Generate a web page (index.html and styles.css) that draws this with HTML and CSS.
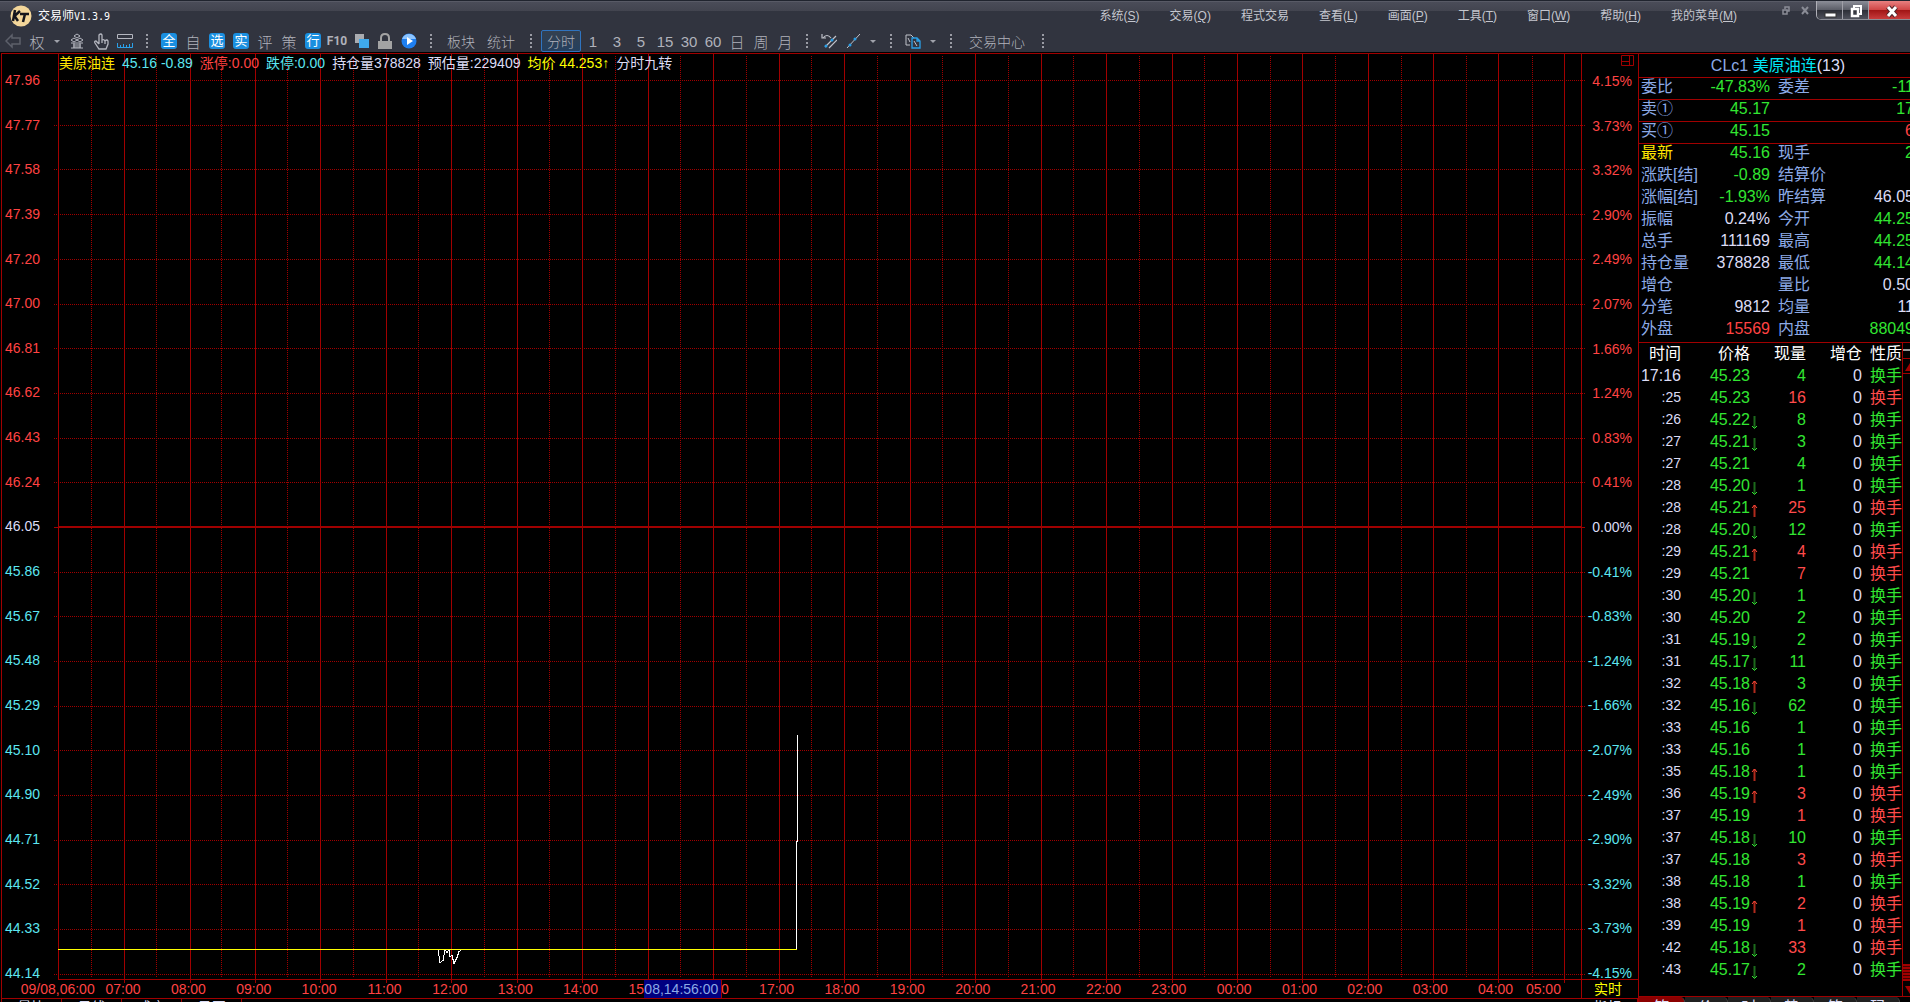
FILE: index.html
```html
<!DOCTYPE html>
<html lang="zh-CN">
<head>
  <meta charset="UTF-8" />
  <meta name="viewport" content="width=device-width, initial-scale=1.0"/>
  <title>交易师V1.3.9</title>
  <link rel="stylesheet" href="styles.css">
</head>
<body>

  <!-- Shared arrow shapes for the tick list -->
  <svg class="defs" width="0" height="0">
    <symbol id="up" viewBox="0 0 7 13">
      <path d="M3.5 1V13" stroke="#b02a1c" stroke-width="2"/>
      <path d="M1 4L3.5 1L6 4" stroke="#ff4a3c" fill="none"/>
    </symbol>
    <symbol id="down" viewBox="0 0 7 13">
      <path d="M3.5 0V12" stroke="#1c6a1c" stroke-width="2"/>
      <path d="M1 10L3.5 12.500L6 10" stroke="#32e632" fill="none"/>
    </symbol>
  </svg>

  <!-- Title bar and toolbar -->
  <header>
    <div class="titlebar">
      <svg class="logo" width="22" height="22" viewBox="0 0 22 22">
        <circle cx="11" cy="11" r="10.500" fill="#f3d69a"/>
        <path d="M5 5L3 16M10 6L4.500 11L8 16" stroke="#15151c" stroke-width="2.500" fill="none"/>
        <path d="M10 9H19M15 9L13 17" stroke="#15151c" stroke-width="2.500" fill="none"/>
      </svg>
      <div class="app-title">交易师<span>V1.3.9</span></div>
      <nav>
        <a href="#">系统(<u>S</u>)</a>
        <a href="#">交易(<u>Q</u>)</a>
        <a href="#">程式交易</a>
        <a href="#">查看(<u>L</u>)</a>
        <a href="#">画面(<u>P</u>)</a>
        <a href="#">工具(<u>T</u>)</a>
        <a href="#">窗口(<u>W</u>)</a>
        <a href="#">帮助(<u>H</u>)</a>
        <a href="#">我的菜单(<u>M</u>)</a>
      </nav>
      <div class="mdi">
        <button aria-label="还原子窗口"><svg width="8" height="9" viewBox="0 0 8 9"><path d="M3 3V1H7V5H5M1 4H5V8H1Z" fill="none" stroke="#8a8c96" stroke-width="1.500"/></svg></button>
        <button aria-label="关闭子窗口"><svg width="8" height="9" viewBox="0 0 8 9"><path d="M1 1L7 8M7 1L1 8" stroke="#8a8c96" stroke-width="2"/></svg></button>
      </div>
      <div class="win-buttons">
        <button aria-label="最小化"><svg width="14" height="14" viewBox="0 0 14 14"><rect x="2" y="9" width="11" height="4" fill="#fff" stroke="#333" stroke-width="1"/></svg></button>
        <button aria-label="还原"><svg width="14" height="14" viewBox="0 0 14 14"><path d="M5 4V2H12V10H10" fill="none" stroke="#fff" stroke-width="2"/><path d="M3 5H9V12H3Z" fill="none" stroke="#fff" stroke-width="2.500"/></svg></button>
        <button class="close" aria-label="关闭"><svg width="14" height="14" viewBox="0 0 14 14"><path d="M3 3L11 12M11 3L3 12" stroke="#50242a" stroke-width="5"/><path d="M3 3L11 12M11 3L3 12" stroke="#fff" stroke-width="3"/></svg></button>
      </div>
    </div>

    <div class="toolbar">
      <button aria-label="后退"><svg width="16" height="16" viewBox="0 0 16 16"><path d="M1 8L7 2V5H15V11H7V14Z" fill="none" stroke="#5d606b" stroke-width="1.500"/></svg></button>
      <button>权</button>
      <button class="caret" aria-label="复权选项"></button>
      <button aria-label="叠加"><svg width="14" height="16" viewBox="0 0 14 16"><path d="M7 1L10 3L7 5L4 3ZM4 5L7 7L4 9L1 7ZM10 5L13 7L10 9L7 7ZM1 10H13M3 12H11M3 14H11M1 15H13M4 10V15M10 10V15" fill="none" stroke="#b4b6bf"/></svg></button>
      <button aria-label="拖动"><svg width="15" height="17" viewBox="0 0 15 17"><path d="M5 11L2 8Q0 8 1 10L5 16H12L14 11V8Q13 6 11 8Q10 6 8 7V2Q7 0 5 2V11M8 7V10M11 8V11" fill="none" stroke="#b4b6bf" stroke-width="1.300"/></svg></button>
      <button aria-label="标尺"><svg width="16" height="16" viewBox="0 0 16 16"><path d="M.5 1.500H15.500V5.500H.5Z" fill="none" stroke="#b4b6bf"/><path d="M.5 10V14.500H15.500V10M3.500 14V12M6.500 14V11M9.500 14V12M12.500 14V11" fill="none" stroke="#2aa0e8"/></svg></button>
      <i class="sep"></i>
      <button><b>全</b></button>
      <button>自</button>
      <button><b>选</b></button>
      <button><b>实</b></button>
      <button>评</button>
      <button>策</button>
      <button><b>行</b></button>
      <button class="f10">F10</button>
      <button aria-label="窗口叠放"><svg width="15" height="16" viewBox="0 0 15 16"><rect x="1" y="1" width="9" height="9" fill="#a9abb0"/><rect x="5" y="6" width="10" height="9" fill="#3fa9ec"/></svg></button>
      <button aria-label="锁定"><svg width="16" height="16" viewBox="0 0 16 16"><path d="M4 8V5Q4 1 8 1Q12 1 12 5V8" fill="none" stroke="#a3a3a3" stroke-width="2"/><rect x="1" y="8" width="14" height="8" fill="#a3a3a3"/></svg></button>
      <button aria-label="播放"><svg width="16" height="16" viewBox="0 0 16 16"><circle cx="8" cy="8" r="7.500" fill="#1f7ff0"/><path d="M1 6Q3 1 8 1Q13 1 15 6Z" fill="#8cc4ff"/><path d="M6 4L12 8L6 12Z" fill="#fff"/></svg></button>
      <i class="sep"></i>
      <button class="wide">板块</button>
      <button class="wide">统计</button>
      <i class="sep"></i>
      <button class="wide active">分时</button>
      <button>1</button>
      <button>3</button>
      <button>5</button>
      <button>15</button>
      <button>30</button>
      <button>60</button>
      <button>日</button>
      <button>周</button>
      <button>月</button>
      <i class="sep"></i>
      <button aria-label="撤销画线"><svg width="16" height="16" viewBox="0 0 16 16"><path d="M2 5Q6 0 10 5M1 1V5H5M4 14L15 3M8 15L16 7" fill="none" stroke="#c0c2ca" stroke-width="1.200"/><circle cx="5" cy="13" r="1.500" fill="#2aa0e8"/><circle cx="11" cy="7" r="1.500" fill="#2aa0e8"/></svg></button>
      <button aria-label="画线"><svg width="14" height="16" viewBox="0 0 14 16"><path d="M1 15L14 1" stroke="#c0c2ca"/><circle cx="4" cy="12" r="1.500" fill="#2aa0e8"/><circle cx="9" cy="6" r="1.500" fill="#2aa0e8"/></svg></button>
      <button class="caret" aria-label="画线选项"></button>
      <i class="sep"></i>
      <button aria-label="复制画面"><svg width="16" height="16" viewBox="0 0 16 16"><path d="M5 12H1V2H6L9 5M3 5L5 9" fill="none" stroke="#c0c2ca"/><path d="M7 5H12L15 8V15H7ZM12 5V8H15" fill="none" stroke="#2aa0e8" stroke-width="1.300"/><path d="M9 8L12 13" stroke="#c0c2ca"/></svg></button>
      <button class="caret" aria-label="复制选项"></button>
      <i class="sep"></i>
      <button class="center">交易中心</button>
      <i class="sep"></i>
    </div>
  </header>

  <main>
    <section class="chart-area">
      <div class="chart">
        <!-- Price axis -->
        <ul class="axis price-axis">
          <li class="red">47.96</li>
          <li class="red">47.77</li>
          <li class="red">47.58</li>
          <li class="red">47.39</li>
          <li class="red">47.20</li>
          <li class="red">47.00</li>
          <li class="red">46.81</li>
          <li class="red">46.62</li>
          <li class="red">46.43</li>
          <li class="red">46.24</li>
          <li class="white">46.05</li>
          <li class="cyan">45.86</li>
          <li class="cyan">45.67</li>
          <li class="cyan">45.48</li>
          <li class="cyan">45.29</li>
          <li class="cyan">45.10</li>
          <li class="cyan">44.90</li>
          <li class="cyan">44.71</li>
          <li class="cyan">44.52</li>
          <li class="cyan">44.33</li>
          <li class="cyan">44.14</li>
        </ul>

        <!-- Intraday plot -->
        <div class="plot">
          <svg class="grid" viewBox="0 0 1523 925" preserveAspectRatio="none">
            <g transform="translate(.5 0)">
              <path class="line" d="M0 0V925M66 0V929M132 0V929M197 0V929M262 0V929M328 0V929M393 0V929M459 0V929M524 0V929M590 0V929M655 0V929M721 0V929M786 0V929M852 0V929M917 0V929M983 0V929M1048 0V929M1114 0V929M1179 0V929M1244 0V929M1310 0V929M1375 0V929M1440 0V929M1506 0V929"/>
              <path class="line dots" d="M33 2V924M98 2V924M163 2V924M229 2V924M295 2V924M360 2V924M426 2V924M491 2V924M557 2V924M622 2V924M688 2V924M753 2V924M819 2V924M884 2V924M950 2V924M1015 2V924M1081 2V924M1146 2V924M1212 2V924M1277 2V924M1343 2V924M1408 2V924M1474 2V924"/>
            </g>
            <g transform="translate(0 .5)">
              <path class="line dots" d="M-4 26H1527M-4 71H1527M-4 115H1527M-4 160H1527M-4 205H1527M-4 250H1527M-4 294H1527M-4 339H1527M-4 384H1527M-4 428H1527M-4 518H1527M-4 562H1527M-4 607H1527M-4 652H1527M-4 696H1527M-4 741H1527M-4 786H1527M-4 830H1527M-4 875H1527M-4 920H1527"/>
              <path class="line" d="M-4 473H1527M0 472H1523"/>
              <path class="price" d="M380 895L382 908L385 906L387 895L389 898L391 895L392 902L394 901L396 909L399 903L401 897L404 895M738 895V787H739V680"/>
              <path class="average" d="M0 895H739"/>
            </g>
          </svg>
          <p class="info">
            <span class="gold">美原油连</span>
            <span class="cyan">45.16 -0.89</span>
            <span class="red">涨停:0.00</span>
            <span class="cyan">跌停:0.00</span>
            <span class="white">持仓量378828</span>
            <span class="white">预估量:229409</span>
            <span class="yellow">均价 44.253↑</span>
            <span class="white">分时九转</span>
          </p>
        </div>

        <!-- Percent axis -->
        <div class="percent">
          <svg class="split" width="13" height="11" viewBox="0 0 13 11"><path d="M.5 .5H12.500V10.500H.5ZM8.500 .5V10.500M.5 6.500H8.500" fill="none" stroke="#a00000"/></svg>
          <ul class="axis">
            <li class="red">4.15%</li>
            <li class="red">3.73%</li>
            <li class="red">3.32%</li>
            <li class="red">2.90%</li>
            <li class="red">2.49%</li>
            <li class="red">2.07%</li>
            <li class="red">1.66%</li>
            <li class="red">1.24%</li>
            <li class="red">0.83%</li>
            <li class="red">0.41%</li>
            <li class="white">0.00%</li>
            <li class="cyan">-0.41%</li>
            <li class="cyan">-0.83%</li>
            <li class="cyan">-1.24%</li>
            <li class="cyan">-1.66%</li>
            <li class="cyan">-2.07%</li>
            <li class="cyan">-2.49%</li>
            <li class="cyan">-2.90%</li>
            <li class="cyan">-3.32%</li>
            <li class="cyan">-3.73%</li>
            <li class="cyan">-4.15%</li>
          </ul>
        </div>

        <!-- Time axis -->
        <div class="corner"></div>
        <div class="times">
          <ol>
            <li>09/08,06:00</li>
            <li>07:00</li>
            <li>08:00</li>
            <li>09:00</li>
            <li>10:00</li>
            <li>11:00</li>
            <li>12:00</li>
            <li>13:00</li>
            <li>14:00</li>
            <li>15:00</li>
            <li>16:00</li>
            <li>17:00</li>
            <li>18:00</li>
            <li>19:00</li>
            <li>20:00</li>
            <li>21:00</li>
            <li>22:00</li>
            <li>23:00</li>
            <li>00:00</li>
            <li>01:00</li>
            <li>02:00</li>
            <li>03:00</li>
            <li>04:00</li>
            <li class="last">05:00</li>
          </ol>
          <span class="cursor-time">08,14:56:00</span>
        </div>
        <div class="live yellow">实时</div>
      </div>

      <div class="bottom-tabs">
        <a href="#">量比</a>
        <a href="#">日线</a>
        <a href="#">成交</a>
        <a href="#">日历</a>
        <a class="end" href="#">指标</a>
      </div>
    </section>

    <!-- Quote panel -->
    <aside>
      <h1>CLc1 <span>美原油连</span><em>(13)</em></h1>
      <table class="quote">
        <tr class="ruled"><th>委比</th><td class="green">-47.83%</td><th>委差</th><td class="green">-11</td></tr>
        <tr class="ruled"><th>卖①</th><td class="green">45.17</td><th></th><td class="green">17</td></tr>
        <tr class="ruled"><th>买①</th><td class="green">45.15</td><th></th><td class="red">6</td></tr>
        <tr><th class="gold">最新</th><td class="green">45.16</td><th>现手</th><td class="green">2</td></tr>
        <tr><th>涨跌[结]</th><td class="green">-0.89</td><th>结算价</th><td></td></tr>
        <tr><th>涨幅[结]</th><td class="green">-1.93%</td><th>昨结算</th><td class="white">46.05</td></tr>
        <tr><th>振幅</th><td class="white">0.24%</td><th>今开</th><td class="green">44.25</td></tr>
        <tr><th>总手</th><td class="white">111169</th><th>最高</th><td class="green">44.25</td></tr>
        <tr><th>持仓量</th><td class="white">378828</td><th>最低</th><td class="green">44.14</td></tr>
        <tr><th>增仓</th><td></td><th>量比</th><td class="white">0.50</td></tr>
        <tr><th>分笔</th><td class="white">9812</td><th>均量</th><td class="white">11</td></tr>
        <tr><th>外盘</th><td class="red">15569</td><th>内盘</th><td class="green">88049</td></tr>
      </table>

      <div class="ticks-wrap">
        <table class="ticks">
          <thead>
            <tr><th>时间</th><th>价格</th><td></td><th>现量</th><th>增仓</th><th>性质</th></tr>
          </thead>
          <tbody>
            <tr class="buy"><td class="full">17:16</td><td>45.23</td><td></td><td>4</td><td>0</td><td>换手</td></tr>
            <tr class="sell"><td>:25</td><td>45.23</td><td></td><td>16</td><td>0</td><td>换手</td></tr>
            <tr class="buy"><td>:26</td><td>45.22</td><td><svg><use href="#down"/></svg></td><td>8</td><td>0</td><td>换手</td></tr>
            <tr class="buy"><td>:27</td><td>45.21</td><td><svg><use href="#down"/></svg></td><td>3</td><td>0</td><td>换手</td></tr>
            <tr class="buy"><td>:27</td><td>45.21</td><td></td><td>4</td><td>0</td><td>换手</td></tr>
            <tr class="buy"><td>:28</td><td>45.20</td><td><svg><use href="#down"/></svg></td><td>1</td><td>0</td><td>换手</td></tr>
            <tr class="sell"><td>:28</td><td>45.21</td><td><svg><use href="#up"/></svg></td><td>25</td><td>0</td><td>换手</td></tr>
            <tr class="buy"><td>:28</td><td>45.20</td><td><svg><use href="#down"/></svg></td><td>12</td><td>0</td><td>换手</td></tr>
            <tr class="sell"><td>:29</td><td>45.21</td><td><svg><use href="#up"/></svg></td><td>4</td><td>0</td><td>换手</td></tr>
            <tr class="sell"><td>:29</td><td>45.21</td><td></td><td>7</td><td>0</td><td>换手</td></tr>
            <tr class="buy"><td>:30</td><td>45.20</td><td><svg><use href="#down"/></svg></td><td>1</td><td>0</td><td>换手</td></tr>
            <tr class="buy"><td>:30</td><td>45.20</td><td></td><td>2</td><td>0</td><td>换手</td></tr>
            <tr class="buy"><td>:31</td><td>45.19</td><td><svg><use href="#down"/></svg></td><td>2</td><td>0</td><td>换手</td></tr>
            <tr class="buy"><td>:31</td><td>45.17</td><td><svg><use href="#down"/></svg></td><td>11</td><td>0</td><td>换手</td></tr>
            <tr class="buy"><td>:32</td><td>45.18</td><td><svg><use href="#up"/></svg></td><td>3</td><td>0</td><td>换手</td></tr>
            <tr class="buy"><td>:32</td><td>45.16</td><td><svg><use href="#down"/></svg></td><td>62</td><td>0</td><td>换手</td></tr>
            <tr class="buy"><td>:33</td><td>45.16</td><td></td><td>1</td><td>0</td><td>换手</td></tr>
            <tr class="buy"><td>:33</td><td>45.16</td><td></td><td>1</td><td>0</td><td>换手</td></tr>
            <tr class="buy"><td>:35</td><td>45.18</td><td><svg><use href="#up"/></svg></td><td>1</td><td>0</td><td>换手</td></tr>
            <tr class="sell"><td>:36</td><td>45.19</td><td><svg><use href="#up"/></svg></td><td>3</td><td>0</td><td>换手</td></tr>
            <tr class="sell"><td>:37</td><td>45.19</td><td></td><td>1</td><td>0</td><td>换手</td></tr>
            <tr class="buy"><td>:37</td><td>45.18</td><td><svg><use href="#down"/></svg></td><td>10</td><td>0</td><td>换手</td></tr>
            <tr class="sell"><td>:37</td><td>45.18</td><td></td><td>3</td><td>0</td><td>换手</td></tr>
            <tr class="buy"><td>:38</td><td>45.18</td><td></td><td>1</td><td>0</td><td>换手</td></tr>
            <tr class="sell"><td>:38</td><td>45.19</td><td><svg><use href="#up"/></svg></td><td>2</td><td>0</td><td>换手</td></tr>
            <tr class="sell"><td>:39</td><td>45.19</td><td></td><td>1</td><td>0</td><td>换手</td></tr>
            <tr class="sell"><td>:42</td><td>45.18</td><td><svg><use href="#down"/></svg></td><td>33</td><td>0</td><td>换手</td></tr>
            <tr class="buy"><td>:43</td><td>45.17</td><td><svg><use href="#down"/></svg></td><td>2</td><td>0</td><td>换手</td></tr>
          </tbody>
        </table>
        <div class="scrollbar">
          <span class="pin"></span>
          <button aria-label="向上滚动"><svg width="10" height="8" viewBox="0 0 10 8"><path d="M5 0L10 8H0Z" fill="#a00000"/></svg></button>
          <span class="thumb"></span>
          <button aria-label="向下滚动"><svg width="10" height="8" viewBox="0 0 10 8"><path d="M0 0H10L5 8Z" fill="#a00000"/></svg></button>
        </div>
      </div>

      <div class="side-tabs">
        <a class="active" href="#">笔</a>
        <a href="#">价</a>
        <a href="#">时</a>
        <a href="#">势</a>
        <a href="#">筹</a>
        <a href="#">码</a>
      </div>
    </aside>
  </main>

</body>
</html>
```

FILE: styles.css
```css
* {
  margin: 0;
  padding: 0;
  box-sizing: border-box;
}

body {
  height: 100vh;
  display: flex;
  flex-direction: column;
  overflow: hidden;
  background: #000;
  color: #dcdcf5;
  font-family: "Liberation Sans", "Noto Sans CJK SC", sans-serif;
  font-size: 14px;
}

button {
  border: none;
  background: none;
  color: inherit;
  font: inherit;
}

a {
  color: inherit;
  text-decoration: none;
}

ul, ol {
  list-style: none;
}

.defs {
  position: absolute;
}

/* Text colours */
.red { color: #ff4343; }
.green { color: #32e632; }
.cyan { color: #5ce6f0; }
.white { color: #dcdcf5; }
.yellow { color: #ffff00; }
.gold { color: #ffe600; }

/* Header */
header {
  height: 52px;
  flex: none;
  border-top: 1px solid #20242e;
  background: linear-gradient(#666873 0, #4a4c58 1px, #42444f 10px, #31343f 10px);
}

.titlebar {
  display: flex;
  height: 29px;
  align-items: center;
}

.logo {
  margin: 0 6px 0 10px;
}

.app-title {
  padding-bottom: 2px;
  font-size: 12px;
  color: #fff;
}

.app-title span {
  font-family: "DejaVu Sans Mono", monospace;
  font-size: 10px;
}

nav {
  display: flex;
  gap: 30px;
  margin-left: auto;
  padding-bottom: 2px;
  font-size: 12px;
  color: #c4c6ce;
}

.mdi {
  display: flex;
  align-self: flex-start;
  gap: 11px;
  margin: 1px 7px 0 45px;
}

.mdi button {
  width: 8px;
}

.win-buttons {
  display: flex;
  align-self: flex-start;
  width: 94px;
  height: 19px;
  border-left: 1px solid #b0b0b8;
  border-bottom: 1px solid #8c8e96;
  border-radius: 0 0 0 5px;
}

.win-buttons button {
  width: 26px;
  background: linear-gradient(#8c8e98, #5a5c66 50%, #2c2e36 50%, #50525c);
  border-right: 1px solid #a0a0a8;
}

.win-buttons svg {
  display: block;
  margin: 2px auto 0;
}

.win-buttons button:first-child {
  border-radius: 0 0 0 5px;
}

.win-buttons .close {
  flex: 1;
  padding-left: 4px;
  border-right: none;
  background: linear-gradient(#e88080, #d04444 50%, #a01414 50%, #c83c3c);
}

.toolbar {
  display: flex;
  align-items: center;
  height: 22px;
  padding-left: 1px;
  font-size: 15px;
  font-weight: 300;
  color: #b0b2bb;
}

.toolbar button {
  display: flex;
  align-items: center;
  justify-content: center;
  flex: none;
  width: 24px;
  height: 22px;
  white-space: nowrap;
}

.toolbar b {
  width: 16px;
  border-radius: 3px;
  background: #1a8fe0;
  color: #fff;
  font-size: 13px;
  line-height: 16px;
  text-align: center;
}

.toolbar .f10 {
  font-family: Roboto, sans-serif;
  font-size: 12px;
  font-weight: bold;
}

.toolbar .wide {
  width: 40px;
  font-size: 14px;
}

.toolbar .active {
  border: 1px solid #2f74c0;
  border-radius: 2px;
  background: linear-gradient(#34404f, #24405f);
}

.toolbar .center {
  width: 72px;
  font-size: 14px;
}

.toolbar .caret {
  width: 16px;
}

.caret::before {
  content: "";
  border: 3px solid transparent;
  border-top-color: #a0a2ab;
  border-bottom: none;
}

.sep {
  width: 20px;
  height: 14px;
  flex: none;
  background: repeating-linear-gradient(#9a9ca5 0 2px, transparent 2px 4px) center / 2px 100% no-repeat;
}

/* Main area */
main {
  display: flex;
  flex: 1;
  min-height: 0;
  margin: 1px -4px 0 1px;
  border-top: 1px solid #a00000;
}

.chart-area {
  flex: 1;
  display: flex;
  flex-direction: column;
  min-width: 0;
  border-left: 1px solid #a00000;
}

.chart {
  flex: 1;
  display: grid;
  grid-template-columns: 56px 1fr 57px;
  grid-template-rows: 1fr 19px;
  min-height: 0;
  border-bottom: 1px solid #a00000;
}

.axis {
  display: flex;
  flex-direction: column;
  justify-content: space-between;
  margin-bottom: -2px;
  line-height: 16px;
}

.price-axis {
  padding: 18px 0 0 3px;
}

.plot {
  position: relative;
}

.grid {
  display: block;
  position: absolute;
  width: 100%;
  height: 100%;
  overflow: visible;
}

.grid path {
  fill: none;
  shape-rendering: crispEdges;
  vector-effect: non-scaling-stroke;
}

.line { stroke: #a00000; }
.dots { stroke-dasharray: 1 1; }
.price { stroke: #fff; }
.average { stroke: #ffff00; }

.info {
  display: flex;
  gap: 7px;
  position: relative;
  padding-left: 1px;
  line-height: 18px;
  white-space: nowrap;
}

.percent {
  display: flex;
  flex-direction: column;
  border-left: 1px solid #a00000;
}

.split {
  flex: none;
  align-self: flex-end;
  margin: 1px 4px 0 0;
}

.percent .axis {
  flex: 1;
  padding: 7px 6px 0 0;
  text-align: right;
}

.times, .live {
  border-top: 1px solid #a00000;
}

.times {
  position: relative;
}

.times ol {
  display: flex;
  margin: 0 20px 0 -33px;
  color: #ff4343;
  line-height: 18px;
}

.times li {
  display: flex;
  justify-content: center;
  flex: 2;
  width: 0;
  white-space: nowrap;
}

.times .last {
  flex: 1;
  justify-content: flex-end;
}

.cursor-time {
  position: absolute;
  top: 0;
  left: 38.5%;
  padding-right: 3px;
  background: #000080;
  border-right: 1px solid #a00000;
  color: #8caae6;
  line-height: 18px;
}

.live {
  border-left: 1px solid #a00000;
  line-height: 18px;
  padding-left: 12px;
}

.bottom-tabs {
  display: flex;
  height: 3px;
  overflow: hidden;
  line-height: 16px;
}

.bottom-tabs a {
  width: 60px;
  border-right: 1px solid #a00000;
  text-align: center;
}

.bottom-tabs .end {
  margin-left: auto;
}

/* Quote panel */
aside {
  width: 276px;
  flex: none;
  display: flex;
  flex-direction: column;
  border-left: 1px solid #a00000;
  font-size: 16px;
}

h1 {
  height: 24px;
  border-bottom: 1px solid #a00000;
  padding-left: 3px;
  color: #8caae6;
  font-size: 16px;
  font-weight: normal;
  line-height: 23px;
  text-align: center;
}

h1 span { color: #00e6f5; }

h1 em {
  color: #dcdcf5;
  font-style: normal;
}

table {
  border-collapse: separate;
  border-spacing: 0;
  table-layout: fixed;
}

th, td {
  height: 22px;
  line-height: 18px;
  font-weight: normal;
  vertical-align: top;
  white-space: nowrap;
}

.quote {
  width: 100%;
  border-bottom: 1px solid #a00000;
}

.quote th {
  width: 66px;
  padding-left: 2px;
  color: #8caae6;
  text-align: left;
}

.quote th.gold { color: #ffe600; }

.quote th:nth-child(3) {
  padding-left: 8px;
}

.quote td {
  text-align: right;
}

.quote td:nth-child(2) {
  width: 65px;
}

.ruled th, .ruled td {
  border-bottom: 1px solid #a00000;
}

.ticks-wrap {
  flex: 1;
  display: flex;
  min-height: 0;
}

.ticks {
  width: 263px;
  align-self: flex-start;
  text-align: right;
}

.ticks th, .ticks td {
  line-height: 22px;
}

.ticks th {
  color: #fff;
}

.ticks td:first-child {
  font-size: 14px;
  line-height: 20px;
}

.ticks td.full {
  font-size: 16px;
  line-height: 22px;
}

.ticks tr > :nth-child(1) { width: 42px; }
.ticks tr > :nth-child(2) { width: 69px; }
.ticks tr > :nth-child(3) { width: 10px; }
.ticks tr > :nth-child(4) { width: 46px; }
.ticks tr > :nth-child(5) { width: 56px; }
.ticks tr > :nth-child(6) { width: 40px; }

.ticks tbody td:nth-child(2) { color: #32e632; }
.buy td:nth-child(4), .buy td:nth-child(6) { color: #32e632; }
.sell td:nth-child(4), .sell td:nth-child(6) { color: #ff4b4b; }

.ticks svg {
  display: block;
  width: 7px;
  height: 13px;
  margin: 7px 0 0 1px;
}

.scrollbar {
  flex: 1;
  display: flex;
  flex-direction: column;
  border-left: 1px solid #a00000;
}

.scrollbar button {
  height: 15px;
  text-align: left;
  padding-left: 2px;
  line-height: 12px;
}

.scrollbar .pin {
  height: 16px;
  border-bottom: 1px solid #a00000;
  background: linear-gradient(#999, #999) 0 6px / 100% 2px no-repeat;
}

.scrollbar .thumb {
  height: 17px;
  margin-top: auto;
  background: repeating-linear-gradient(#a00000 0 2px, #400000 2px 3px);
}

.scrollbar .pin + button {
  border-bottom: 1px solid #a00000;
}

.side-tabs {
  display: flex;
  height: 6px;
  overflow: hidden;
  border-top: 1px solid #a00000;
  line-height: 22px;
}

.side-tabs a {
  width: 43px;
  border-radius: 0 5px 0 0;
  border-right: 1px solid #444;
  background: #202020;
  text-align: center;
}

.side-tabs .active {
  width: 46px;
  background: #8c0000;
}
```
